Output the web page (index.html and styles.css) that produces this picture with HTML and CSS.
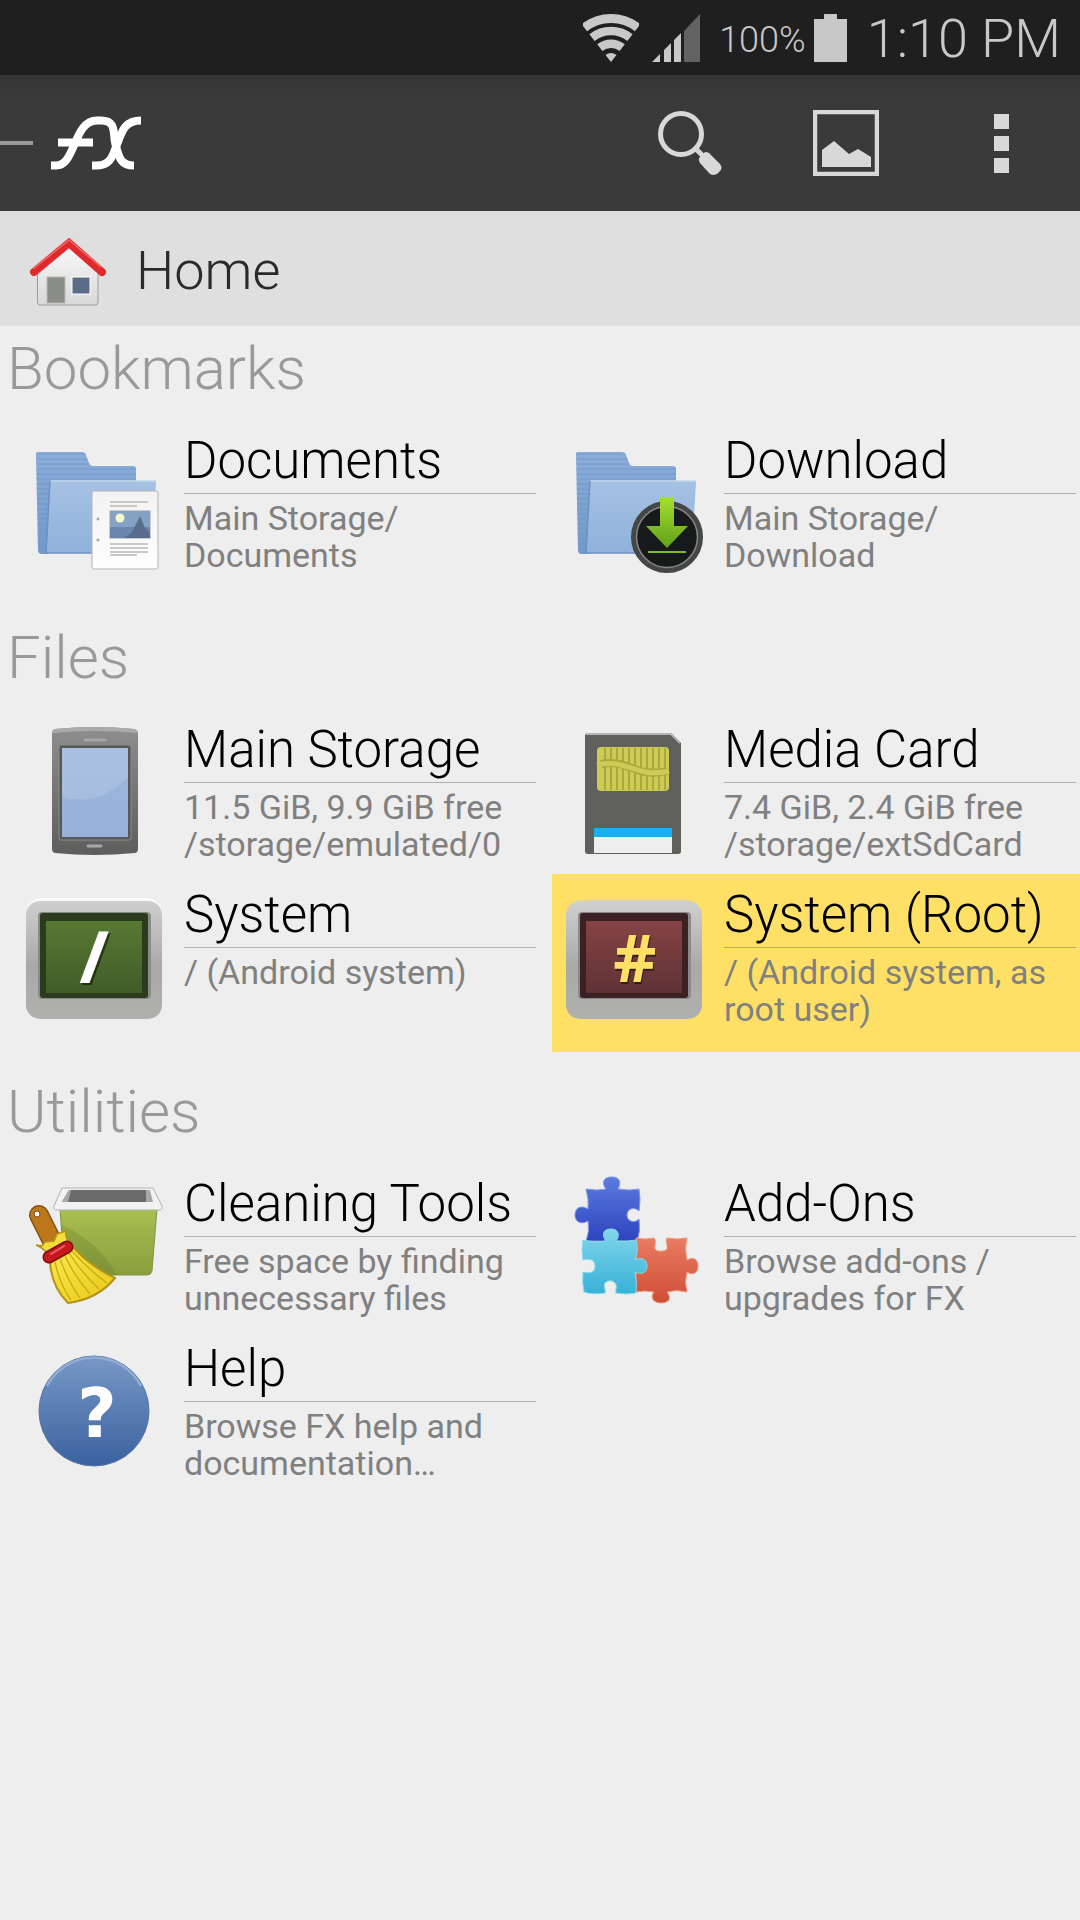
FILE: index.html
```html
<!DOCTYPE html>
<html lang="en">
<head>
<meta charset="utf-8">
<meta name="viewport" content="width=device-width, initial-scale=1">
<title>FX - Home</title>
<link rel="stylesheet" href="styles.css">
</head>
<body>
  <!-- shared gradients and the folder shape -->
  <svg class="defs" width="0" height="0" aria-hidden="true">
    <defs>
      <linearGradient id="folderBack" x1="0" y1="0" x2="0" y2="1">
        <stop offset="0" stop-color="#8badd9"/><stop offset="1" stop-color="#7398c9"/>
      </linearGradient>
      <linearGradient id="folderFront" x1="0" y1="0" x2="0" y2="1">
        <stop offset="0" stop-color="#a6c2e3"/><stop offset="1" stop-color="#8fb1db"/>
      </linearGradient>
      <linearGradient id="paper" x1="0" y1="0" x2="0" y2="1">
        <stop offset="0" stop-color="#f3f3f3"/><stop offset="1" stop-color="#fdfdfd"/>
      </linearGradient>
      <linearGradient id="arrow" x1="0" y1="0" x2="0" y2="1">
        <stop offset="0" stop-color="#a5e032"/><stop offset="1" stop-color="#61a01a"/>
      </linearGradient>
      <linearGradient id="phone" x1="0" y1="0" x2="0" y2="1">
        <stop offset="0" stop-color="#8e8e8e"/><stop offset="1" stop-color="#5d5e5c"/>
      </linearGradient>
      <linearGradient id="screen" x1="0" y1="0" x2="0" y2="1">
        <stop offset="0" stop-color="#abc0e1"/><stop offset="1" stop-color="#a3bbdf"/>
      </linearGradient>
      <linearGradient id="frame" x1="0" y1="0" x2="0" y2="1">
        <stop offset="0" stop-color="#cfcfcf"/><stop offset=".55" stop-color="#a9aaa8"/><stop offset="1" stop-color="#b0b1af"/>
      </linearGradient>
      <linearGradient id="green" x1="0" y1="0" x2="0" y2="1">
        <stop offset="0" stop-color="#577a32"/><stop offset="1" stop-color="#405c28"/>
      </linearGradient>
      <linearGradient id="red" x1="0" y1="0" x2="0" y2="1">
        <stop offset="0" stop-color="#864345"/><stop offset="1" stop-color="#5e3235"/>
      </linearGradient>
      <linearGradient id="bin" x1="0" y1="0" x2="0" y2="1">
        <stop offset="0" stop-color="#a9bf51"/><stop offset="1" stop-color="#889f3d"/>
      </linearGradient>
      <linearGradient id="bristle" x1="0" y1="0" x2="1" y2="1">
        <stop offset="0" stop-color="#fbe94c"/><stop offset="1" stop-color="#e8c915"/>
      </linearGradient>
      <linearGradient id="help" x1="0" y1="0" x2="0" y2="1">
        <stop offset="0" stop-color="#7898c6"/><stop offset="1" stop-color="#3b629f"/>
      </linearGradient>
      <linearGradient id="blue" x1="0" y1="0" x2="0" y2="1">
        <stop offset="0" stop-color="#5d7be0"/><stop offset="1" stop-color="#2c44be"/>
      </linearGradient>
      <linearGradient id="cyan" x1="0" y1="0" x2="0" y2="1">
        <stop offset="0" stop-color="#82d6ea"/><stop offset="1" stop-color="#37b1d7"/>
      </linearGradient>
      <linearGradient id="orange" x1="0" y1="0" x2="0" y2="1">
        <stop offset="0" stop-color="#e97c61"/><stop offset="1" stop-color="#cf4d35"/>
      </linearGradient>
      <linearGradient id="wall" x1="0" y1="0" x2="0" y2="1">
        <stop offset="0" stop-color="#fafafa"/><stop offset="1" stop-color="#d8d8d8"/>
      </linearGradient>
      <pattern id="lines" width="4" height="5" patternUnits="userSpaceOnUse">
        <rect width="4" height="2" fill="#6f95c8" opacity=".4"/>
      </pattern>
      <pattern id="pins" width="6" height="6" patternUnits="userSpaceOnUse">
        <rect width="2" height="6" fill="#aaa93b"/>
      </pattern>
      <g id="folder">
        <path fill="url(#folderBack)" d="M16 19H60Q63 19 64 22L67 30Q68 33 71 33H111Q114 33 114 36V60H30L26 121H20Q16 121 16 117L14 21Q14 19 16 19z"/>
        <path fill="url(#lines)" d="M16 19H60Q63 19 64 22L67 30Q68 33 71 33H111Q114 33 114 36V60H30L26 121H20Q16 121 16 117L14 21Q14 19 16 19z"/>
        <path fill="url(#folderFront)" d="M28 48H134L130 120H24z"/>
        <path fill="none" stroke="#c3d7ee" stroke-width="1.5" d="M28 48H134"/>
        <path fill="none" stroke="#6d91c1" stroke-width="1.5" d="M28 48L24 120H130"/>
      </g>
    </defs>
  </svg>

  <div class="status-bar">
    <svg class="wifi" width="56" height="48" viewBox="0 0 56 48" role="img" aria-label="Wi-Fi">
      <g fill="none" stroke="#c8c8c8">
        <path stroke-width="9" d="M1.3 13.7A43.5 43.5 0 0 1 54.7 13.7"/>
        <path stroke-width="8.5" d="M9 23.6A31 31 0 0 1 47 23.6"/>
        <path stroke-width="8.5" d="M16.8 33.6A18.3 18.3 0 0 1 39.2 33.6"/>
      </g>
      <path fill="#c8c8c8" d="M28 48L22.5 41A9 9 0 0 1 33.5 41z"/>
    </svg>
    <svg class="signal" width="49" height="48" viewBox="0 0 49 48" role="img" aria-label="Signal">
      <path fill="#c8c8c8" d="M0 48L8 40V48zM12 48V36L19 29V48zM22 48V26L29 19V48z"/>
      <path fill="#626262" d="M32 48V17L48 0V48z"/>
    </svg>
    <span class="percent">100%</span>
    <svg class="battery" width="33" height="48" viewBox="0 0 33 48" role="img" aria-label="Battery">
      <path fill="#c8c8c8" d="M10 0H23V5H33V48H0V5H10z"/>
    </svg>
    <span class="time">1:10 PM</span>
  </div>

  <header class="app-bar">
    <button class="drawer-btn" aria-label="Open menu"><span class="dash"></span></button>
    <svg class="logo" width="91" height="54" viewBox="0 0 91 54" role="img" aria-label="FX">
      <g fill="none" stroke="#fff" stroke-width="8">
        <path d="M0 49.500H5C25 49.500 22 4.500 46 4.500H50C67 4.500 61 19 65 30C68 42 70 49.500 83 49.500"/>
        <path d="M7 26.500H42"/>
        <path d="M41 49.500H46C62 49.500 62 36 67 26C71 15 74 4.500 90 4.500"/>
      </g>
    </svg>
    <div class="actions">
      <button class="action" aria-label="Search">
        <svg width="66" height="66" viewBox="0 0 66 66">
          <circle cx="24" cy="24" r="20.500" fill="none" stroke="#d8d8d8" stroke-width="5"/>
          <path stroke="#d8d8d8" stroke-width="5" d="M37 37L46 46"/>
          <path fill="#d8d8d8" d="M42 48L48 42Q50 42 52 43L63 54Q66 58 63 61Q60 65 56 65Q54 65 52 63L43 53Q41 50 42 48z"/>
        </svg>
      </button>
      <button class="action" aria-label="View">
        <svg width="66" height="66" viewBox="0 0 66 66">
          <rect x="2" y="2" width="62" height="62" fill="none" stroke="#d8d8d8" stroke-width="4.500"/>
          <path fill="#d8d8d8" d="M9 40L21 31L36 44L45 39L58 47V57H9z"/>
        </svg>
      </button>
      <button class="action" aria-label="More options">
        <svg width="16" height="60" viewBox="0 0 16 60">
          <path fill="#d8d8d8" d="M0 1H15V16H0zM0 23H15V38H0zM0 45H15V60H0z"/>
        </svg>
      </button>
    </div>
  </header>

  <nav class="location">
    <svg width="80" height="80" viewBox="0 0 80 80" aria-hidden="true">
      <path fill="url(#wall)" stroke="#9b9b9b" d="M9.500 40L41 14L70 40V73Q70 76 67 76H12Q9.500 76 9.500 73z"/>
      <rect x="19" y="48" width="18" height="26" fill="#8b8e88" stroke="#b9b9b5"/>
      <rect x="44" y="48" width="18" height="17" fill="#5b6b88" stroke="#fff"/>
      <path fill="none" stroke="#e0292d" stroke-width="8" stroke-linecap="round" d="M6 43L41 14L74 43"/>
      <path fill="none" stroke="#f26a68" stroke-width="1.500" d="M5 40L41 11L73 38"/>
    </svg>
    <h1>Home</h1>
  </nav>

  <main>
    <section>
      <h2>Bookmarks</h2>
      <div class="grid">
        <a class="item" href="#documents">
          <svg class="icon" viewBox="0 0 144 144" aria-hidden="true">
            <use href="#folder"/>
            <rect x="70" y="58" width="66" height="78" rx="2" fill="url(#paper)" stroke="#b5b5b5"/>
            <path stroke="#b9b9b9" stroke-width="1.500" d="M88 69H126M88 73H115M88 111H126M88 115H126M88 119H126M88 122H115"/>
            <rect x="88" y="78" width="40" height="27" fill="#86a2c3" stroke="#98a2ae"/>
            <path fill="#6a85ae" d="M88 94H128V105H88z"/>
            <path fill="#586d8b" d="M112 95L118 83L123 95Q128 97 128 105H101Q110 102 112 95z"/>
            <circle cx="98" cy="85" r="4.500" fill="#f4f8cf"/>
            <circle cx="76" cy="86" r="1.500" fill="#aaa"/>
            <circle cx="76" cy="107" r="1.500" fill="#aaa"/>
          </svg>
          <span class="text">
            <span class="name">Documents</span>
            <span class="info">Main Storage/<wbr>Documents</span>
          </span>
        </a>
        <a class="item" href="#download">
          <svg class="icon" viewBox="0 0 144 144" aria-hidden="true">
            <use href="#folder"/>
            <circle cx="105" cy="104" r="33" fill="#17191a" stroke="#454646" stroke-width="6"/>
            <circle cx="105" cy="104" r="30.500" fill="none" stroke="#858686" stroke-width="1.500"/>
            <path fill="url(#arrow)" d="M98 64H112V93H126L105 115L84 93H98z"/>
            <path stroke="#7fba28" stroke-width="2" d="M86 119H124"/>
          </svg>
          <span class="text">
            <span class="name">Download</span>
            <span class="info">Main Storage/<wbr>Download</span>
          </span>
        </a>
      </div>
    </section>

    <section>
      <h2>Files</h2>
      <div class="grid">
        <a class="item" href="#main-storage">
          <svg class="icon" viewBox="0 8 144 144" aria-hidden="true">
            <path fill="url(#phone)" d="M30 19Q30 16 33 15Q72 11 112 15Q116 16 116 19V135Q116 138 113 139Q72 143 33 139Q30 138 30 135z"/>
            <path fill="#aaa" d="M30 19Q30 16 33 15Q72 11 112 15Q116 16 116 19Q72 15 30 19z"/>
            <rect x="37" y="31" width="72" height="95" rx="2" fill="#555958"/>
            <rect x="37" y="31" width="72" height="95" rx="2" fill="none" stroke="#8b8d8c"/>
            <rect x="40" y="34" width="66" height="89" fill="url(#screen)"/>
            <path fill="#8ca7d2" opacity=".45" d="M40 83Q75 93 106 64V123H40z"/>
            <path stroke="#a5a5a5" stroke-width="3" stroke-linecap="round" d="M63 26H83M66 132H79"/>
          </svg>
          <span class="text">
            <span class="name">Main Storage</span>
            <span class="info">11.5 GiB, 9.9 GiB free<br>/storage/emulated/0</span>
          </span>
        </a>
        <a class="item" href="#media-card">
          <svg class="icon" viewBox="0 0 144 144" aria-hidden="true">
            <path fill="#5f605c" d="M26 11H109L119 21V129Q119 132 116 132H26Q23 132 23 129V14Q23 11 26 11z"/>
            <path fill="none" stroke="#b5b6b2" stroke-width="2" d="M24 12H109L118 21"/>
            <rect x="35" y="25" width="72" height="44" rx="4" fill="#cdca58"/>
            <rect x="39" y="26" width="66" height="42" fill="url(#pins)"/>
            <path fill="none" stroke="#aaa93b" stroke-width="8" d="M39 42C65 36 75 57 105 49"/>
            <path fill="none" stroke="#cdca58" stroke-width="5" d="M35 43C65 36 75 57 107 49"/>
            <path fill="#1caef0" d="M32 106H110V115H32z"/>
            <path fill="#eee" d="M32 115H110V131H32z"/>
          </svg>
          <span class="text">
            <span class="name">Media Card</span>
            <span class="info">7.4 GiB, 2.4 GiB free<br>/storage/extSdCard</span>
          </span>
        </a>
        <a class="item" href="#system">
          <svg class="icon" viewBox="0 0 144 144" aria-hidden="true">
            <rect x="4" y="11" width="136" height="118" rx="15" fill="#fafafa"/>
            <rect x="4" y="14" width="136" height="118" rx="14" fill="url(#frame)"/>
            <rect x="16" y="25" width="113" height="87" rx="4" fill="#8a8b89"/>
            <rect x="18" y="26" width="108" height="85" rx="3" fill="#2c3b1d"/>
            <rect x="24" y="34" width="96" height="72" fill="url(#green)"/>
            <text class="glyph slash" x="74" y="98">/</text>
            <text class="glyph slash light" x="72" y="96">/</text>
          </svg>
          <span class="text">
            <span class="name">System</span>
            <span class="info">/ (Android system)</span>
          </span>
        </a>
        <a class="item selected" href="#system-root">
          <svg class="icon" viewBox="0 0 144 144" aria-hidden="true">
            <rect x="4" y="13" width="136" height="118" rx="15" fill="#d9d4b0"/>
            <rect x="4" y="15" width="136" height="117" rx="14" fill="url(#frame)"/>
            <rect x="16" y="25" width="113" height="87" rx="4" fill="#8a8b89"/>
            <rect x="18" y="26" width="108" height="85" rx="3" fill="#3c2124"/>
            <rect x="24" y="34" width="96" height="72" fill="url(#red)"/>
            <text class="glyph hash" x="74" y="97">#</text>
            <text class="glyph hash yellow" x="73" y="95">#</text>
          </svg>
          <span class="text">
            <span class="name">System (Root)</span>
            <span class="info">/ (Android system, as root user)</span>
          </span>
        </a>
      </div>
    </section>

    <section>
      <h2>Utilities</h2>
      <div class="grid">
        <a class="item" href="#cleaning">
          <svg class="icon" viewBox="0 11 144 144" aria-hidden="true">
            <path fill="url(#bin)" stroke="#849641" d="M38 44H135L130 106Q129 110 125 110H43z"/>
            <path fill="#566520" opacity=".2" d="M39 60Q75 75 95 110H43z"/>
            <path fill="#f2f2f2" stroke="#b2b2b2" d="M40 23H131L140 41Q141 45 137 45H35Q31 45 32 41z"/>
            <path fill="#6b6b6b" d="M47 25H127V37H40z"/>
            <path fill="#a8a8a8" d="M47 25L40 37H46L49 25zM124 25H128L131 37H124z"/>
            <path stroke="#8a5410" stroke-width="20" stroke-linecap="round" d="M17 50L31 78"/>
            <path stroke="#bd771b" stroke-width="17" stroke-linecap="round" d="M17 50L31 78"/>
            <circle cx="15" cy="49" r="3" fill="#fff" stroke="#7c4a10"/>
            <path fill="#f3dd3a" stroke="#b3931b" stroke-width="1.500" d="M14 80L20 81L23 77L32 76L35 69L44 66Q42 72 50 82L28 94Q26 85 14 80z"/>
            <path fill="url(#bristle)" stroke="#b3931b" stroke-width="2" d="M28 96L51 82Q68 101 93 113Q76 134 46 138Q29 121 28 96z"/>
            <path fill="none" stroke="#c9a91a" stroke-width="1.300" d="M33 97Q38 120 49 135M38 94Q46 116 58 133M43 91Q53 112 68 129M47 88Q60 108 77 124M50 86Q66 104 85 118"/>
            <path stroke="#7b0f10" stroke-width="13" stroke-linecap="round" d="M27 92L45 82"/>
            <path stroke="#c9191c" stroke-width="10" stroke-linecap="round" d="M27 92L45 82"/>
            <path stroke="#ea6464" stroke-width="2" stroke-linecap="round" d="M29 89L42 81"/>
          </svg>
          <span class="text">
            <span class="name">Cleaning Tools</span>
            <span class="info">Free space by finding unnecessary files</span>
          </span>
        </a>
        <a class="item" href="#add-ons">
          <svg class="icon" viewBox="0 11 144 144" aria-hidden="true">
            <path fill="url(#blue)" stroke="#7f97ea" d="M24 24Q36 26 44 24C40 19 40 12 50 12C59 12 59 19 56 24Q68 26 77 24Q79 34 77 46C72 41 65 44 65 50C65 56 72 59 77 54Q79 66 75 76H24Q28 66 26 56C19 60 13 57 13 50C13 42 20 40 26 44Q27 34 24 24z"/>
            <path fill="url(#orange)" stroke="#ee9780" d="M74 73Q84 75 92 73C95 77 92 80 93 84C95 87 103 87 105 84C106 80 103 77 105 73Q116 75 125 73Q122 84 125 95C132 91 136 95 136 101C136 108 131 111 125 107Q122 117 125 127Q115 124 105 127C110 133 107 138 99 138C91 138 88 132 92 127Q83 125 74 127z"/>
            <path fill="url(#cyan)" stroke="#8ad9ea" d="M21 75Q34 78 44 76C40 71 40 64 49 64C57 64 58 71 54 76Q65 77 74 75Q77 86 73 95C80 91 85 95 85 101C85 108 79 110 73 107Q75 117 74 128Q64 130 54 128C53 124 56 122 53 118C50 115 46 115 43 118C41 122 44 124 43 128Q30 130 22 127Q20 118 21 107C29 109 33 107 33 101C33 95 28 93 21 95Q19 85 21 75z"/>
          </svg>
          <span class="text">
            <span class="name">Add-Ons</span>
            <span class="info">Browse add-ons / upgrades for FX</span>
          </span>
        </a>
        <a class="item" href="#help">
          <svg class="icon" viewBox="0 0 144 144" aria-hidden="true">
            <circle cx="72" cy="70" r="55" fill="url(#help)" stroke="#5474a6"/>
            <path fill="none" stroke="#93add2" stroke-width="2.500" d="M25 45A53 53 0 0 1 119 45"/>
            <text class="glyph question" x="75" y="96">?</text>
          </svg>
          <span class="text">
            <span class="name">Help</span>
            <span class="info">Browse FX help and documentation…</span>
          </span>
        </a>
      </div>
    </section>
  </main>
</body>
</html>
```
FILE: styles.css
```css
* {
  box-sizing: border-box;
}

body {
  margin: 0;
  min-height: 100vh;
  background: #eee;
  font-family: Roboto, "Noto Sans", sans-serif;
  font-weight: 300;
}

button {
  background: none;
  border: none;
  padding: 0;
  cursor: pointer;
}

svg {
  display: block;
  flex: none;
}

.defs {
  position: absolute;
}

/* status bar */
.status-bar {
  display: flex;
  align-items: center;
  justify-content: flex-end;
  height: 75px;
  padding-right: 19px;
  background: #1f1f1f;
  color: #c8c8c8;
}

.signal {
  margin-left: 13px;
}

.percent {
  margin: 4px 8px 0 18px;
  font-size: 36px;
}

.time {
  margin-left: 20px;
  padding-top: 2px;
  font-size: 54px;
}

/* app bar */
.app-bar {
  display: flex;
  align-items: center;
  height: 136px;
  background: linear-gradient(#353535, #3a3a3a 20%);
}

.drawer-btn {
  width: 33px;
  height: 100%;
}

.dash {
  display: block;
  height: 4px;
  background: #999;
}

.logo {
  margin-left: 18px;
}

.actions {
  display: flex;
  height: 100%;
  margin-left: auto;
}

.action {
  display: flex;
  align-items: center;
  justify-content: center;
  width: 156px;
}

/* current location */
.location {
  display: flex;
  align-items: center;
  gap: 28px;
  height: 115px;
  padding-left: 28px;
  background: #dfdfdf;
}

h1 {
  margin: 0;
  padding-top: 4px;
  color: #2b2b2b;
  font-size: 54px;
  font-weight: 300;
}

/* sections */
section {
  padding-bottom: 30px;
}

h2 {
  margin: 0;
  padding: 8px 7px 16px;
  color: #999;
  font-size: 60px;
  font-weight: 300;
  line-height: 70px;
}

.grid {
  display: grid;
  grid-template-columns: 1fr 1fr;
  grid-auto-rows: 165px;
}

.item {
  display: flex;
  align-items: flex-start;
  gap: 18px;
  height: 178px;
  margin-left: 12px;
  padding: 11px 4px 0 10px;
  color: #000;
  text-decoration: none;
}

.selected {
  background: #ffe066;
}

.icon {
  width: 144px;
  height: 144px;
  margin-top: 2px;
}

.text {
  flex: 1;
  min-width: 0;
}

.name {
  display: block;
  padding-bottom: 2px;
  border-bottom: 1px solid #b0b0b0;
  font-size: 51px;
  line-height: 60px;
}

.selected .name {
  border-color: #b5a978;
}

.info {
  display: block;
  margin-top: 6px;
  color: #808080;
  font-size: 34px;
  font-weight: 400;
  line-height: 37px;
}

/* symbols inside the icons */
.glyph {
  font-family: "Open Sans", sans-serif;
  font-weight: 700;
  text-anchor: middle;
  fill: rgba(0, 0, 0, 0.5);
}

.slash {
  font-size: 72px;
}

.hash {
  font-size: 67px;
}

.light {
  fill: #fff;
}

.yellow {
  fill: #ffe066;
}

.question {
  font-family: "DejaVu Sans", sans-serif;
  font-size: 68px;
  fill: #fff;
}
```
